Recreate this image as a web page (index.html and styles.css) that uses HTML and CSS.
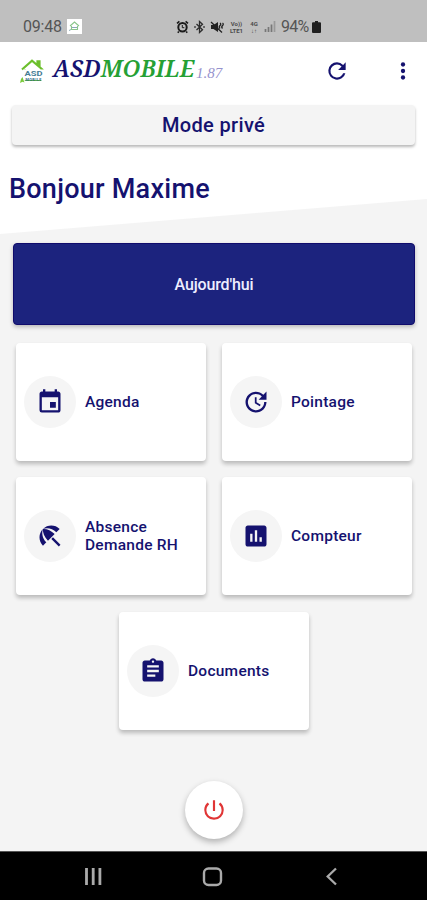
FILE: index.html
```html
<!DOCTYPE html>
<html lang="fr">
<head>
<meta charset="utf-8">
<title>ASD Mobile</title>
<link rel="stylesheet" href="styles.css">
</head>
<body>
<div class="status">
  <span class="time">09:48</span>
  <svg class="notif" viewBox="0 0 15 15"><path fill="#fff" d="M0 0h15v15H0z"/><path fill="none" stroke="#8bc58b" stroke-width="1.1" d="M3 7l4.5-4L12 7M4.500 7v3.500h6V7"/><path stroke="#8aa9b8" d="M5 8.500h5M2 11.500l2-1"/></svg>
  <div class="tray">
    <svg width="13" height="14" viewBox="0 0 13 14" fill="none" stroke="#1b1b1b"><circle cx="6.5" cy="7.3" r="4.2" stroke-width="2"/><path stroke-width="1.6" d="M1 3.400L3.400 1.400M12 3.400L9.600 1.400M2.800 11.500l-1 1.300M10.200 11.500l1 1.300"/><path d="M6.300 5v2.700h2"/></svg>
    <svg width="11" height="14" viewBox="0 0 11 14" fill="none" stroke="#2c2c2c" stroke-width="1.3"><path d="M2.500 4l6 5.800-3 2.700V1.500l3 2.700-6 5.800"/><path stroke-width="1.6" d="M.2 7h1.600M9.200 7h1.600"/></svg>
    <svg width="14" height="14" viewBox="0 0 14 14"><path fill="#222" d="M1 5h2.500L8 2v10L3.500 9H1z"/><path fill="none" stroke="#222" stroke-width="1.3" d="M1 2l11 10.500M10 3q1.500 1 0 2.500t0 3M12.500 3q1.500 1 0 2.500t0 3"/></svg>
    <span class="net"><span>Vo))</span><span>LTE1</span></span>
    <span class="net four"><span>4G</span><span>↓↑</span></span>
    <svg width="12" height="13" viewBox="0 0 12 13"><path stroke="#777" stroke-width="1.7" d="M1.500 12v-3M4.500 12V7M7.500 12V4.500"/><path stroke="#999" stroke-width="1.7" d="M10.500 12V1"/></svg>
    <span class="pct">94%</span>
    <svg class="batt" width="9" height="12" viewBox="0 0 9 12"><path fill="#202020" d="M3 0h3v1.200h2q1 0 1 1V11q0 1-1 1H1q-1 0-1-1V2.200q0-1 1-1h2z"/></svg>
  </div>
</div>
<header class="bar">
  <svg class="logo" viewBox="0 0 25 25"><path fill="none" stroke="#6cbf2c" stroke-width="2.200" d="M2 10.500L12 1.700 23 11M17.500 5.500V2.300h2V7.500"/><path fill="none" stroke="#6cbf2c" d="M5 10v11.500h16V10"/><path fill="#fff" d="M3.500 10.500h20v10.500h-20z"/><text x="4.500" y="16.800" class="logo-big" textLength="18" lengthAdjust="spacingAndGlyphs">ASD</text><text x="5.500" y="21.800" class="logo-small" textLength="16">MOBILE</text><path fill="#79ca3a" d="M0 24l1-4 1.500-2 1 3 1 2.500-2-.7z"/></svg>
  <div class="brand"><span>ASD</span><span class="green">MOBILE</span></div><span class="ver">1.87</span>
  <svg class="refresh" viewBox="0 0 24 24"><path d="M17.650 6.350A7.958 7.958 0 0 0 12 4a8 8 0 1 0 7.730 10h-2.080A6 6 0 1 1 12 6c1.660 0 3.140.690 4.220 1.780L13 11h7V4z"/></svg>
  <svg class="more" viewBox="0 0 24 24"><circle cx="12" cy="6" r="2"/><circle cx="12" cy="12" r="2"/><circle cx="12" cy="18" r="2"/></svg>
</header>
<main class="main">
  <div class="mode"><span>Mode privé</span></div>
  <h1 class="hello">Bonjour Maxime</h1>
  <div class="today"><span>Aujourd'hui</span></div>
  <div class="grid">
    <div class="card"><div class="disc"><svg viewBox="0 0 24 24"><path d="M17 12h-5v5h5v-5zM16 1v2H8V1H6v2H5c-1.110 0-1.990.900-1.990 2L3 19a2 2 0 0 0 2 2h14c1.100 0 2-.900 2-2V5c0-1.100-.900-2-2-2h-1V1h-2zm3 18H5V8h14v11z"/></svg></div><span>Agenda</span></div>
    <div class="card"><div class="disc"><svg viewBox="0 0 24 24"><path d="M21 10.120h-6.780l2.740-2.820c-2.730-2.700-7.150-2.800-9.880-.100-2.730 2.710-2.730 7.080 0 9.790s7.150 2.710 9.880 0C18.320 15.650 19 14.080 19 12.100h2c0 1.980-.880 4.550-2.640 6.290-3.510 3.480-9.210 3.480-12.720 0-3.500-3.470-3.530-9.110-.020-12.580s9.140-3.470 12.650 0L21 3v7.120zM12.500 8v4.250l3.500 2.080-.720 1.210L11 13V8h1.500z"/></svg></div><span>Pointage</span></div>
    <div class="card"><div class="disc"><svg viewBox="0 0 24 24"><path d="M13.127 14.560l1.430-1.430 6.440 6.443L19.570 21zm4.293-5.730l2.860-2.860c-3.950-3.950-10.350-3.960-14.300-.020 3.930-1.300 8.310-.250 11.440 2.880zM5.950 5.980c-3.940 3.950-3.930 10.350.020 14.300l2.860-2.860C5.700 14.290 4.650 9.910 5.950 5.980zm.020-.020l-.010.010c-.380 3.010 1.170 6.880 4.300 10.020l5.730-5.730c-3.130-3.130-7.010-4.680-10.020-4.300z"/></svg></div><span>Absence<br>Demande RH</span></div>
    <div class="card"><div class="disc"><svg viewBox="0 0 24 24"><path d="M19 3H5c-1.100 0-2 .900-2 2v14c0 1.100.900 2 2 2h14c1.100 0 2-.900 2-2V5c0-1.100-.900-2-2-2zM9 17H7v-7h2v7zm4 0h-2V7h2v10zm4 0h-2v-4h2v4z"/></svg></div><span>Compteur</span></div>
    <div class="card"><div class="disc"><svg viewBox="0 0 24 24"><path d="M19 3h-4.180C14.400 1.840 13.300 1 12 1s-2.400.840-2.820 2H5c-1.100 0-2 .900-2 2v14c0 1.100.900 2 2 2h14c1.100 0 2-.900 2-2V5c0-1.100-.900-2-2-2zm-7 0c.550 0 1 .450 1 1s-.450 1-1 1-1-.450-1-1 .450-1 1-1zm2 14H7v-2h7v2zm3-4H7v-2h10v2zm0-4H7V7h10v2z"/></svg></div><span>Documents</span></div>
  </div>
  <div class="power"><svg viewBox="0 0 24 24"><path d="M13 3h-2v10h2V3zm4.830 2.170l-1.420 1.420A6.920 6.920 0 0 1 19 12a7 7 0 1 1-11.420-5.420L6.170 5.170A8.932 8.932 0 0 0 3 12a9 9 0 0 0 18 0c0-2.740-1.230-5.180-3.170-6.830z"/></svg></div>
</main>
<nav class="nav">
  <svg viewBox="0 0 427 48" fill="none" stroke="#aaa"><path stroke-width="2.800" d="M86.500 16v17M93.200 16v17M99.900 16v17"/><rect x="204" y="16.500" width="17" height="16.500" rx="4.500" stroke-width="2.400"/><path stroke-width="2.300" d="M336 16.500l-8.300 8 8.300 8"/></svg>
</nav>
</body>
</html>
```
FILE: styles.css
```css
* { box-sizing: border-box; }
body {
  margin: 0;
  width: 427px;
  height: 900px;
  overflow: hidden;
  display: flex;
  flex-direction: column;
  font-family: Roboto, sans-serif;
  color: #15126f;
  background: #f4f4f4;
}
svg { display: block; flex: none; }
.status {
  height: 42px;
  flex: none;
  background: #bfbfbf;
  color: #555;
  display: flex;
  align-items: center;
  padding: 11px 106px 0 23px;
}
.time { font-size: 16px; letter-spacing: -0.2px; width: 44px; }
.notif { width: 15px; height: 15px; }
.tray { margin-left: auto; display: flex; align-items: center; gap: 5px; }
.net {
  display: flex;
  flex-direction: column;
  align-items: center;
  font-size: 6px;
  line-height: 7px;
  font-weight: 700;
  width: 15px;
  color: #4c4c4c;
}
.four { width: 10px; }
.pct { font-size: 16px; letter-spacing: -0.8px; width: 28px; }
.batt { margin-left: -2px; }
.bar {
  height: 58px;
  flex: none;
  background: #fff;
  display: flex;
  align-items: center;
  padding: 0 11px 0 20px;
}
.logo { width: 25px; height: 25px; }
.logo-big { font: 700 7px Roboto, sans-serif; fill: #477e96; }
.logo-small { font: 700 3.800px Roboto, sans-serif; fill: #286985; }
.brand {
  font: italic 600 23px/28px "Noto Serif", "Liberation Serif", serif;
  letter-spacing: .1px;
  margin: -7px 0 0 8px;
  width: 143px;
  white-space: nowrap;
}
.green { color: #25a034; }
.ver { font: italic 15px "Liberation Serif", serif; color: #9692cd; margin-top: 5px; }
.refresh { width: 26px; height: 26px; fill: #15126f; margin-left: auto; }
.more { width: 26px; height: 26px; fill: #15126f; margin-left: 40px; }
.main {
  flex: 1;
  background: linear-gradient(175.300deg, #fff 0 132px, #f4f4f4 133px);
  background: linear-gradient(to bottom right, transparent calc(50% - .5px), #f4f4f4 calc(50% + .5px)) 0 99px / 427px 35px no-repeat, linear-gradient(#fff 116px, #f4f4f4 116px);
  background: linear-gradient(to bottom right, #fff calc(50% - .5px), #f4f4f4 calc(50% + .5px)) 0 99px / 427px 35px no-repeat, linear-gradient(#fff 99px, #f4f4f4 99px);
  padding: 5px 12px 0 12px;
}
.mode {
  height: 40px;
  border-radius: 4px;
  background: #f4f4f4;
  box-shadow: 0 2px 3px rgba(0,0,0,.28);
  display: flex;
  align-items: center;
  justify-content: center;
  font-size: 20px;
  font-weight: 500;
  letter-spacing: .35px;
}
.hello { font-size: 27px; line-height: 30px; font-weight: 500; margin: 29px 0 39px -3px; letter-spacing: .25px; }
.today {
  height: 82px;
  margin: 0 0 17.500px 1px;
  border-radius: 4px;
  background: #1c237e;
  border: 1px solid #100b6c;
  box-shadow: 0 2px 4px rgba(0,0,0,.25);
  color: #eef;
  font-size: 16px;
  font-weight: 500;
  letter-spacing: -.15px;
  display: flex;
  align-items: center;
  justify-content: center;
}
.grid { display: flex; flex-wrap: wrap; justify-content: center; gap: 16.500px 16px; margin-right: -1px; }
.card {
  width: 190px;
  height: 118px;
  border-radius: 4px;
  background: #fff;
  box-shadow: 0 3px 4px rgba(0,0,0,.24);
  display: flex;
  align-items: center;
  gap: 9px;
  padding-left: 8px;
  font-size: 15.500px;
  line-height: 18px;
  font-weight: 500;
  letter-spacing: .25px;
}
.disc {
  width: 52px;
  height: 52px;
  border-radius: 50%;
  background: #f5f5f5;
  display: flex;
  align-items: center;
  justify-content: center;
}
.disc svg { width: 28px; height: 28px; fill: #15126f; }
.power {
  width: 58px;
  height: 58px;
  margin: 51px auto 0;
  border-radius: 50%;
  background: #fff;
  box-shadow: 0 3px 6px rgba(0,0,0,.28);
  display: flex;
  align-items: center;
  justify-content: center;
}
.power svg { width: 26px; height: 26px; fill: #e03535; }
.nav { height: 49px; flex: none; background: #000; border-top: 1px solid #555; }
```
